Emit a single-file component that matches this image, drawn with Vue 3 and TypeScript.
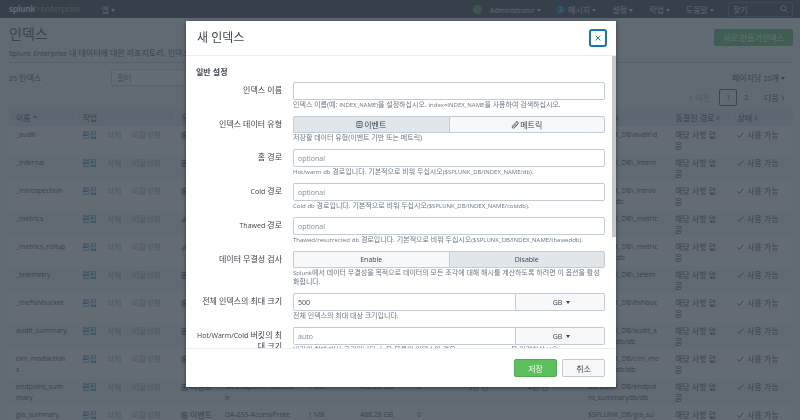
<script setup lang="ts">
import { h, ref, type FunctionalComponent } from 'vue'

// Latin runs are set one size below the Hangul around them.
const Mix: FunctionalComponent<{ t: string }> = (props) =>
  props.t
    .split(/([!-~]*[A-Za-z0-9][!-~]*)/)
    .filter(Boolean)
    .map((part) => (/[A-Za-z0-9]/.test(part) ? h('span', { class: 'latin' }, part) : part))
Mix.props = ['t']

interface IndexRow {
  name: string
  metric?: boolean
  app: string
  path: string
}

const columns = [
  { label: '이름', width: 67, sort: 'up' },
  { label: '작업', width: 99, sort: '' },
  { label: '유형', width: 44, sort: 'both' },
  { label: '앱', width: 83, sort: 'both' },
  { label: '현재 크기', width: 52, sort: '' },
  { label: '최대 크기', width: 57, sort: '' },
  { label: '이벤트', width: 51, sort: '' },
  { label: '처음', width: 60, sort: '' },
  { label: '최근', width: 60, sort: '' },
  { label: '홈 경로', width: 87, sort: 'both' },
  { label: '동결된 경로', width: 62, sort: 'both' },
  { label: '상태', width: 62, sort: 'both' },
]

// Long app names and paths carry their own line breaks.
const rows: IndexRow[] = [
  { name: '_audit', app: 'system', path: '$SPLUNK_DB\\audit\\d\nb' },
  { name: '_internal', app: 'system', path: '$SPLUNK_DB\\_intern\naldb\\db' },
  { name: '_introspection', app: 'system', path: '$SPLUNK_DB\\_intros\npection\\db' },
  { name: '_metrics', metric: true, app: 'system', path: '$SPLUNK_DB\\_metric\ns\\db' },
  { name: '_metrics_rollup', metric: true, app: 'system', path: '$SPLUNK_DB\\_metric\ns_rollup\\db' },
  { name: '_telemetry', app: 'system', path: '$SPLUNK_DB\\_telem\netry\\db' },
  { name: '_thefishbucket', app: 'system', path: '$SPLUNK_DB\\fishbuc\nket\\db' },
  { name: 'audit_summary', app: 'system', path: '$SPLUNK_DB/audit_s\nummarydb/db' },
  { name: 'cim_modactions', app: 'Splunk_SA_CIM', path: '$SPLUNK_DB/cim_mo\ndactionsdb/db' },
  { name: 'endpoint_summary', app: 'SA-EndpointProtectio\nn', path: '$SPLUNK_DB/endpoi\nnt_summarydb/db' },
  { name: 'gia_summary', app: 'DA-ESS-AccessProte\nction', path: '$SPLUNK_DB/gia_su\nmmary/db' },
]

const menus = ['메시지', '설정', '작업', '도움말']

const name = ref('')
const kind = ref<'event' | 'metric'>('event')
const integrity = ref(false)
const maxSize = ref('500')

const paths = [
  { id: 'home', label: '홈 경로', help: 'Hot/warm db 경로입니다. 기본적으로 비워 두십시오($SPLUNK_DB/INDEX_NAME/db).' },
  { id: 'cold', label: 'Cold 경로', help: 'Cold db 경로입니다. 기본적으로 비워 두십시오($SPLUNK_DB/INDEX_NAME/colddb).' },
  { id: 'thawed', label: 'Thawed 경로', help: 'Thawed/resurrected db 경로입니다. 기본적으로 비워 두십시오($SPLUNK_DB/INDEX_NAME/thaweddb).' },
]
</script>

<template>
  <div class="page" inert>
    <header class="nav">
      <a class="logo" href="#"><b>splunk</b>&gt;enterprise</a>
      <a class="menu" href="#">앱 <i class="caret" /></a>
      <span class="spacer" />
      <span class="dot ok">i</span>
      <a class="menu admin" href="#"><Mix t="Administrator" /> <i class="caret" /></a>
      <span class="dot msg">2</span>
      <a v-for="m in menus" :key="m" class="menu item" href="#">{{ m }} <i class="caret" /></a>
      <label class="find">
        <input type="text" placeholder="찾기" aria-label="찾기" />
        <svg viewBox="0 0 8 8" width="8" height="8"><circle cx="3.3" cy="3.3" r="2.5" /><path d="M5.2 5.2 7.5 7.5" /></svg>
      </label>
    </header>

    <section class="intro">
      <div>
        <h1>인덱스</h1>
        <p><Mix t="Splunk Enterprise 내 데이터에 대한 리포지토리. 인덱스는 로컬에 있습니다." /></p>
      </div>
      <button class="create" type="button">새로 만들기인덱스</button>
    </section>

    <section class="tools">
      <span class="count"><Mix t="25 인덱스" /></span>
      <input class="filter" type="text" placeholder="필터" aria-label="필터" />
      <a class="menu per" href="#"><Mix t="페이지당 20개" /> <i class="caret" /></a>
    </section>

    <nav class="pager">
      <a class="off" href="#"><svg viewBox="0 0 4 6" width="4" height="6"><path d="M3.2.6.8 3l2.4 2.4" /></svg> 이전</a>
      <a class="current" href="#">1</a>
      <a class="num" href="#">2</a>
      <a class="next" href="#">다음 <svg viewBox="0 0 4 6" width="4" height="6"><path d="M.8.6 3.2 3 .8 5.4" /></svg></a>
    </nav>

    <table>
      <colgroup>
        <col v-for="c in columns" :key="c.label" :style="{ width: c.width + 'px' }" />
      </colgroup>
      <thead>
        <tr>
          <th v-for="c in columns" :key="c.label">
            {{ c.label }}
            <svg v-if="c.sort" :class="['sort', c.sort]" viewBox="0 0 4 6" width="4" height="6">
              <path d="M0 2.5 2 .3 4 2.5z" /><path v-if="c.sort === 'both'" d="M0 3.5 2 5.7 4 3.5z" />
            </svg>
          </th>
        </tr>
      </thead>
      <tbody>
        <tr v-for="r in rows" :key="r.name">
          <td class="lat name">{{ r.name }}</td>
          <td class="acts"><a href="#">편집</a><span>삭제</span><span>비활성화</span></td>
          <td class="kind">
            <svg v-if="r.metric" viewBox="0 0 8 8" width="7" height="7"><path d="M5.6.9 1.4 5.1a1.3 1.3 0 0 0 1.8 1.8L7 3.1A1.5 1.5 0 0 0 5 1" /><path d="M2.6 5.8 5.6 2.8" /></svg>
            <svg v-else viewBox="0 0 8 8" width="7" height="7"><rect x="1.2" y=".6" width="5.6" height="6.8" rx=".8" /><path d="M2.5 2.6h3M2.5 4h3M2.5 5.4h3" /></svg>
            {{ r.metric ? '메트릭' : '이벤트' }}
          </td>
          <td class="lat lines">{{ r.app }}</td>
          <td class="lat">1 MB</td>
          <td class="lat">488.28 GB</td>
          <td class="lat">0</td>
          <td><template v-if="r.name !== 'gia_summary'"><Mix t="5년 전" /></template></td>
          <td><template v-if="r.name !== 'gia_summary'"><Mix t="4년 전" /></template></td>
          <td class="lat lines">{{ r.path }}</td>
          <td>해당 사항 없음</td>
          <td class="state"><svg viewBox="0 0 7 6" width="7" height="6"><path d="M.6 3.4 2.4 5.3 6.4.6" /></svg>사용 가능</td>
        </tr>
      </tbody>
    </table>
  </div>

  <div class="backdrop">
    <form class="modal" role="dialog" aria-labelledby="dlg-title" @submit.prevent>
      <header class="head">
        <h2 id="dlg-title">새 인덱스</h2>
        <button class="close" type="button" aria-label="닫기">
          <svg viewBox="0 0 6 6" width="6" height="6"><path d="M.6.6l4.8 4.8M5.4.6.6 5.4" /></svg>
        </button>
      </header>

      <div class="scroll">
        <div class="body">
          <h3>일반 설정</h3>

          <div class="row">
            <label for="f-name">인덱스 이름</label>
            <div>
              <input id="f-name" v-model="name" class="box" type="text" />
              <p><Mix t="인덱스 이름(예: INDEX_NAME)을 설정하십시오. index=INDEX_NAME을 사용하여 검색하십시오." /></p>
            </div>
          </div>

          <div class="row" role="group" aria-labelledby="l-kind">
            <span id="l-kind" class="label">인덱스 데이터 유형</span>
            <div>
              <div class="toggle">
                <button type="button" :aria-pressed="kind === 'event'" @click="kind = 'event'">
                  <svg viewBox="0 0 8 8" width="7" height="7"><rect x="1" y=".6" width="6" height="6.8" rx=".6" /><path d="M2.4 2.6h3.2M2.4 5.2h3.2" /></svg>이벤트
                </button>
                <button type="button" :aria-pressed="kind === 'metric'" @click="kind = 'metric'">
                  <svg viewBox="0 0 8 8" width="8" height="8"><path d="M5.6.9 1.4 5.1a1.3 1.3 0 0 0 1.8 1.8L7 3.1A1.5 1.5 0 0 0 5 1" /><path d="M2.6 5.8 5.6 2.8" /></svg> 메트릭
                </button>
              </div>
              <p>저장할 데이터 유형(이벤트 기반 또는 메트릭)</p>
            </div>
          </div>

          <div v-for="p in paths" :key="p.id" class="row">
            <label :for="p.id"><Mix :t="p.label" /></label>
            <div>
              <input :id="p.id" class="box" type="text" placeholder="optional" />
              <p><Mix :t="p.help" /></p>
            </div>
          </div>

          <div class="row" role="group" aria-labelledby="l-int">
            <span id="l-int" class="label">데이터 무결성 검사</span>
            <div>
              <div class="toggle lat">
                <button type="button" :aria-pressed="integrity" @click="integrity = true">Enable</button>
                <button type="button" :aria-pressed="!integrity" @click="integrity = false">Disable</button>
              </div>
              <p><Mix t="Splunk에서 데이터 무결성을 목적으로 데이터의 모든 조각에 대해 해시를 계산하도록 하려면 이 옵션을 활성화합니다." /></p>
            </div>
          </div>

          <div class="row">
            <label for="f-max">전체 인덱스의 최대 크기</label>
            <div>
              <div class="sized">
                <input id="f-max" v-model="maxSize" class="box" type="text" />
                <span class="unit">
                  <select aria-label="전체 인덱스 크기 단위"><option>GB</option><option>MB</option></select>
                  <i class="caret" />
                </span>
              </div>
              <p>전체 인덱스의 최대 대상 크기입니다.</p>
            </div>
          </div>

          <div class="row">
            <label for="f-bucket"><Mix t="Hot/Warm/Cold 버킷의 최대 크기" /></label>
            <div>
              <div class="sized">
                <input id="f-bucket" class="box" type="text" placeholder="auto" />
                <span class="unit">
                  <select aria-label="버킷 크기 단위"><option>GB</option><option>MB</option></select>
                  <i class="caret" />
                </span>
              </div>
              <p><Mix t="버킷의 최대 대상 크기입니다. 높은 볼륨의 인덱스인 경우 'auto_high_volume'을 입력하십시오." /></p>
            </div>
          </div>
        </div>
        <span class="thumb" />
      </div>

      <footer class="foot">
        <button class="save" type="submit">저장</button>
        <button class="cancel" type="button">취소</button>
      </footer>
    </form>
  </div>
</template>

<style>
:root {
  --latin: 7px;
}
body {
  margin: 0;
  overflow: hidden;
  background: #f2f4f5;
}
#app {
  font: 8px/11px 'Open Sans', 'Noto Sans CJK KR', sans-serif;
  color: #3c444d;
}
.latin {
  font-size: var(--latin);
  line-height: 1;
}
</style>

<style scoped>
* {
  box-sizing: border-box;
}
a {
  color: inherit;
  text-decoration: none;
}
button,
input,
select {
  font: inherit;
  color: inherit;
  margin: 0;
}
h1,
h2,
h3,
p {
  margin: 0;
  font-weight: 400;
}
svg {
  fill: none;
  stroke: currentColor;
  stroke-width: 0.9;
}
.lat {
  font-size: 7px;
}
.caret {
  display: inline-block;
  border: 2px solid transparent;
  border-top: 3px solid currentColor;
  border-bottom: 0;
  vertical-align: 1px;
}
.page {
  height: 100vh;
  overflow: hidden;
}

.nav {
  display: flex;
  align-items: center;
  height: 18px;
  padding: 0 7px 0 9px;
  background: #31373e;
  color: #e0e4e8;
}
.logo {
  font: 9px/12px Lato, sans-serif;
  color: #65c637;
  margin-right: 21px;
}
.logo b {
  color: #fff;
}
.menu {
  white-space: nowrap;
}
.spacer {
  flex: 1;
}
.dot {
  width: 9px;
  height: 9px;
  border-radius: 50%;
  font-size: 7px;
  line-height: 9px;
  text-align: center;
}
.ok {
  background: #53a051;
  color: #31373e;
  margin-right: 8px;
}
.msg {
  background: #006eaa;
  margin-right: 3px;
}
.admin {
  margin-right: 15px;
}
.item {
  margin-right: 16px;
}
.item:nth-last-child(2) {
  margin-right: 14px;
}
.find {
  display: flex;
  align-items: center;
  width: 65px;
  height: 15px;
  padding: 0 4px;
  border: 1px solid #5c6773;
  border-radius: 2px;
}
.find input {
  flex: 1;
  min-width: 0;
  padding: 0;
  border: 0;
  background: none;
}
.find input::placeholder {
  color: #e0e4e8;
}

.intro {
  display: flex;
  justify-content: space-between;
  align-items: flex-start;
  margin: 0 7px 0 9px;
  padding: 7px 0 4px;
  border-bottom: 1px solid #c3cbd4;
}
h1 {
  font-size: 14px;
  line-height: 18px;
  margin-bottom: 4px;
}
.create {
  height: 17px;
  margin-top: 4px;
  padding: 0 9px;
  border: 0;
  border-radius: 2px;
  background: #5cc05c;
  color: #fff;
}
.tools {
  display: flex;
  align-items: center;
  padding: 6px 15px 0 9px;
}
.count {
  width: 102px;
}
.filter {
  width: 220px;
  height: 17px;
  padding: 0 5px;
  border: 1px solid #c3cbd4;
  border-radius: 2px;
  background: #fff;
}
.per {
  margin-left: auto;
}
.pager {
  display: flex;
  justify-content: flex-end;
  align-items: center;
  height: 17px;
  margin: 3px 15px 3px 9px;
}
.off {
  color: #a0aab4;
  margin-right: 9px;
}
.current {
  width: 18px;
  height: 17px;
  border: 1px solid #006eaa;
  border-radius: 2px;
  font-size: 7px;
  line-height: 15px;
  text-align: center;
  margin-right: 7px;
}
.num {
  font-size: 7px;
  margin-right: 16px;
}

table {
  table-layout: fixed;
  width: calc(100% - 16px);
  margin-left: 9px;
  border-collapse: collapse;
}
th {
  height: 17px;
  padding: 0 0 0 6px;
  background: #e1e6eb;
  border-left: 1px solid #f2f4f5;
  text-align: left;
  font-weight: 400;
  white-space: nowrap;
  overflow: hidden;
}
th:first-child {
  border-left: 0;
  padding-left: 7px;
}
.sort {
  fill: #818d99;
  stroke: none;
}
.sort.up {
  fill: #006eaa;
}
td {
  height: 28px;
  padding: 3px 8px 3px 6px;
  vertical-align: top;
  word-break: break-all;
}
td:first-child {
  padding-left: 7px;
}
tbody tr:nth-child(odd) {
  background: #fff;
}
td.acts,
td.kind,
td.state {
  padding-right: 0;
  white-space: nowrap;
}
td.lines {
  padding-right: 0;
  white-space: pre-line;
}
.acts a {
  color: #006eaa;
}
.acts span {
  margin-left: 10px;
  color: #a0aab4;
}
.kind svg {
  vertical-align: -1px;
}
.state svg {
  margin-right: 3px;
}

.backdrop {
  position: fixed;
  inset: 0;
  display: flex;
  justify-content: center;
  align-items: flex-start;
  padding: 21px 16px 33px 18px;
  background: rgba(55, 67, 78, 0.78);
}
.modal {
  flex: 0 1 430px;
  min-width: 0;
  background: #fff;
  box-shadow: 0 1px 4px rgba(0, 0, 0, 0.45);
}
.head {
  display: flex;
  justify-content: space-between;
  align-items: center;
  height: 35px;
  padding: 0 9px 0 11px;
  border-bottom: 1px solid #ebeef1;
}
h2 {
  font-size: 12px;
  line-height: 16px;
}
.close {
  display: grid;
  place-items: center;
  width: 18px;
  height: 18px;
  padding: 0;
  border: 2px solid #1478b4;
  border-radius: 3px;
  background: #fff;
  color: #006eaa;
}
.scroll {
  position: relative;
}
.body {
  max-height: calc(100vh - 128px);
  padding: 10px 11px 0 10px;
  overflow: hidden;
}
.thumb {
  position: absolute;
  top: 0;
  right: 0;
  width: 4px;
  height: 62%;
  background: #c8c8c8;
}
h3 {
  font-size: 8px;
  font-weight: 700;
  margin-bottom: 5px;
}
.row {
  display: grid;
  grid-template-columns: 86px minmax(0, 1fr);
  column-gap: 11px;
  margin-bottom: 7px;
}
.row > label,
.label {
  padding-top: 2px;
  text-align: right;
}
.row p {
  --latin: 6px;
  font-size: 7px;
  line-height: 9px;
  color: #6b7785;
}
.box {
  display: block;
  width: 100%;
  height: 18px;
  padding: 0 4px;
  border: 1px solid #c3cbd4;
  border-radius: 2px;
  background: #fff;
  font-size: 7px;
}
.box::placeholder {
  color: #818d99;
}
.toggle {
  display: flex;
  height: 17px;
}
.toggle button {
  flex: 1;
  display: flex;
  justify-content: center;
  align-items: center;
  gap: 1px;
  padding: 0;
  border: 1px solid #c3cbd4;
  background: #f7f8fa;
}
.toggle button:first-child {
  border-right: 0;
  border-radius: 2px 0 0 2px;
}
.toggle button:last-child {
  border-radius: 0 2px 2px 0;
}
.toggle button[aria-pressed='true'] {
  background: #e1e6eb;
}
.sized {
  display: flex;
}
.sized .box {
  flex: 1;
  border-radius: 2px 0 0 2px;
}
.unit {
  position: relative;
  width: 89px;
}
.unit select {
  display: block;
  appearance: none;
  width: 100%;
  height: 18px;
  padding: 0 5px 0 0;
  border: 1px solid #c3cbd4;
  border-left: 0;
  border-radius: 0 2px 2px 0;
  background: #f7f8fa;
  font-size: 7px;
  text-align: center;
  text-align-last: center;
}
.unit .caret {
  position: absolute;
  top: 8px;
  left: calc(50% + 5px);
}
.foot {
  display: flex;
  justify-content: flex-end;
  gap: 5px;
  padding: 10px 11px;
  border-top: 1px solid #ebeef1;
}
.foot button {
  width: 43px;
  height: 18px;
  padding: 0;
  border-radius: 2px;
}
.save {
  border: 1px solid #4fae4f;
  background: #5cc05c;
  color: #fff;
}
.cancel {
  border: 1px solid #c3cbd4;
  background: #f7f8fa;
}
</style>
